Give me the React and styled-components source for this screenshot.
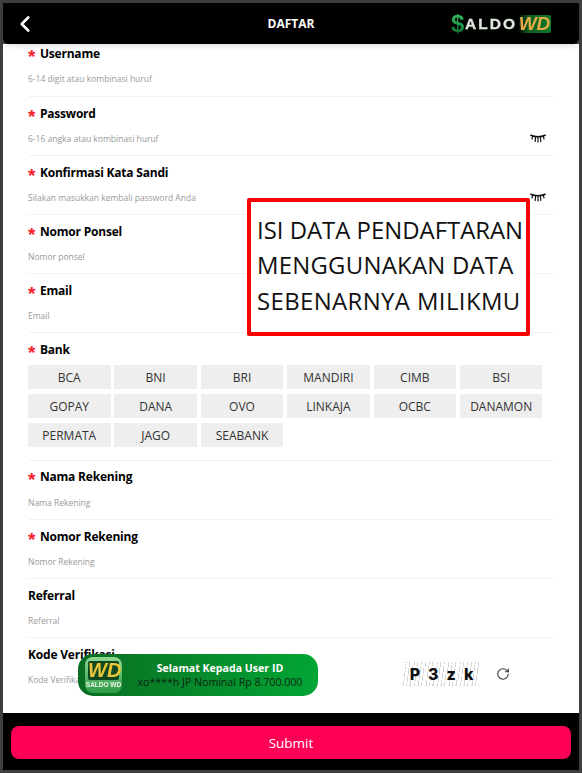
import React from 'react';
import styled, { createGlobalStyle } from 'styled-components';
import { ChevronLeft, RotateCw } from 'lucide-react';

const Global = createGlobalStyle`
  html, body { margin: 0; padding: 0; background: #3f3f3f; }
  * { box-sizing: border-box; }
`;

const Frame = styled.div`
  position: relative;
  width: 582px;
  height: 773px;
  padding: 3px;
  background: #3f3f3f;
  display: flex;
  flex-direction: column;
  overflow: hidden;
  font-family: "Open Sans", "Noto Sans", sans-serif;
`;

const Header = styled.header`
  position: relative;
  z-index: 2;
  flex: 0 0 41px;
  display: grid;
  grid-template-columns: 1fr auto 1fr;
  align-items: center;
  padding: 0 28px 0 9px;
  background: #000;
  color: #fff;
  border-radius: 0 0 6px 6px;
  box-shadow: 0 2px 6px rgba(0, 0, 0, 0.12);
`;

const BackButton = styled.span`
  display: flex;
  align-items: center;
  color: #fff;
`;

const Title = styled.h1`
  margin: 0 0 0 19px;
  font-size: 12px;
  font-weight: 700;
  letter-spacing: 0;
`;

const Logo = styled.div`
  justify-self: end;
  display: flex;
  align-items: center;
  font-family: "Liberation Sans", sans-serif;
  font-weight: 700;
  filter: blur(0.45px);
`;

const LogoDollar = styled.span`
  font-size: 24px;
  line-height: 24px;
  width: 14px;
  background: linear-gradient(180deg, #35c763, #0e6a30);
  -webkit-background-clip: text;
  background-clip: text;
  color: transparent;
`;

const LogoWord = styled.span`
  font-size: 15.5px;
  line-height: 1;
  letter-spacing: 2px;
  color: #dfe8dc;
  -webkit-text-stroke: 0.3px #dfe8dc;
`;

const LogoBadge = styled.span`
  margin-left: 1px;
  width: 33px;
  height: 18px;
  font-size: 19px;
  line-height: 18px;
  font-style: italic;
  font-weight: 700;
  text-align: center;
  color: #e5ac45;
  background: linear-gradient(90deg, #000 0, #0c5c1f 30%, #0d7a28 100%);
  border-radius: 2px;
`;

const Body = styled.main`
  flex: 1;
  min-height: 0;
  background: #fff;
  overflow: hidden;
  padding: 0 25px;
`;

const Form = styled.div`
  margin-top: -7px;
`;

const Row = styled.div`
  display: flex;
  flex-direction: column;
  height: ${(p) => p.$height || 59}px;
  padding-top: ${(p) => (p.$tight ? 6 : 7)}px;
  border-bottom: 1px solid #f3f3f3;
  &:first-child { height: 60px; }
  &:last-child { border-bottom: 0; }
`;

const Label = styled.div`
  display: flex;
  align-items: center;
  gap: 4.5px;
  height: 18px;
  font-size: 12px;
  letter-spacing: -0.2px;
  font-weight: 700;
  color: #000;
`;

const Star = styled.span`
  color: #f5222d;
  font-size: 19px;
  font-weight: 700;
  letter-spacing: 0;
  font-family: "Liberation Sans", sans-serif;
  line-height: 18px;
  padding-top: 7px;
`;

const InputLine = styled.div`
  display: flex;
  align-items: center;
  justify-content: space-between;
  height: 16px;
  margin-top: ${(p) => (p.$tight ? 9 : 8)}px;
`;

const Hint = styled.span`
  font-size: 8.5px;
  color: #9a9a9a;
`;

const EyeIcon = styled.svg`
  width: 16px;
  height: 9px;
  margin-right: 8px;
  flex: none;
`;

const BankGrid = styled.div`
  display: grid;
  grid-template-columns: repeat(6, 82.5px);
  grid-auto-rows: 24px;
  column-gap: 3.9px;
  row-gap: 5px;
  margin-top: 7px;
`;

const BankChip = styled.div`
  display: flex;
  align-items: center;
  justify-content: center;
  background: #eeeeee;
  color: #333;
  font-size: 12px;
`;

const CaptchaBox = styled.div`
  position: relative;
  width: 77px;
  height: 24px;
  display: flex;
  align-items: center;
  justify-content: center;
  gap: 8px;
  font-family: "Inter", sans-serif;
  font-weight: 800;
  font-size: 16px;
  color: #111;
`;

const CaptchaNoise = styled.svg`
  position: absolute;
  inset: 0;
  width: 100%;
  height: 100%;
`;

const CaptchaChar = styled.span`
  position: relative;
`;

const CaptchaGroup = styled.div`
  display: flex;
  align-items: center;
  gap: 16px;
  margin-top: -11px;
  margin-right: 44px;
  color: #333;
`;

const Footer = styled.footer`
  flex: 0 0 57px;
  background: #000;
  padding: 13px 8px 11px;
  display: flex;
`;

const Submit = styled.button`
  flex: 1;
  border: 0;
  border-radius: 8px;
  background: #ff0055;
  color: #fff;
  font-family: "Open Sans", sans-serif;
  font-size: 13.5px;
  font-weight: 400;
`;

const Notice = styled.div`
  position: absolute;
  left: 247px;
  top: 198px;
  width: 283px;
  height: 138px;
  z-index: 3;
  background: #fff;
  border: 4px solid #fa0000;
  border-radius: 2px;
  padding: 0 0 4px 6px;
  display: flex;
  flex-direction: column;
  justify-content: center;
  font-family: "Open Sans", sans-serif;
  font-size: 23.9px;
  line-height: 35.3px;
  color: #111;
  white-space: nowrap;
`;

const NoticeLine = styled.div`
  letter-spacing: ${(p) => p.$spacing || 0}px;
`;

const Toast = styled.div`
  position: absolute;
  left: 78px;
  top: 654px;
  width: 240px;
  height: 42px;
  z-index: 3;
  border-radius: 15px;
  background: linear-gradient(90deg, #0a6d22, #02a634);
  display: flex;
  align-items: center;
  padding-left: 7px;
`;

const ToastIcon = styled.div`
  flex: none;
  width: 37px;
  height: 36px;
  border-radius: 8px;
  background: linear-gradient(180deg, #8fd894, #2c9a46);
  display: flex;
  flex-direction: column;
  align-items: center;
  justify-content: center;
  font-family: "Liberation Sans", sans-serif;
  font-weight: 700;
  filter: blur(0.3px);
`;

const ToastIconMark = styled.span`
  width: 31px;
  font-size: 20px;
  line-height: 19px;
  font-style: italic;
  text-align: center;
  color: #e9c53a;
  background: #10481f;
  border-radius: 2px;
`;

const ToastIconWord = styled.span`
  font-size: 6.5px;
  line-height: 9px;
  color: #f2f6e8;
`;

const ToastText = styled.div`
  flex: 1;
  text-align: center;
  font-size: 10.6px;
  line-height: 14px;
  margin-top: -1px;
`;

const ToastTitle = styled.div`
  font-weight: 700;
  color: #fff;
`;

const ToastLine = styled.div`
  color: #0c2412;
`;

const Eye = () => (
  <EyeIcon viewBox="0 0 16 9" fill="none" stroke="#111" strokeWidth="1.2" strokeLinecap="round">
    <path d="M0.8 1.2 C5 3 11 3 15.2 1.2" strokeWidth="1.5" />
    <path d="M2.6 2.4 L2 5M5.6 3 L5.2 7.5M8 3.2 L8 8M10.4 3 L10.8 7.5M13.4 2.4 L14 5" />
  </EyeIcon>
);

const dots = Array.from({ length: 420 }, (_, i) => ({
  x: Math.floor((i * 47.3) % 77),
  y: Math.floor((i * 13.7 + (i % 7) * 3.1) % 24),
  o: 0.3 + ((i * 5) % 5) * 0.14,
}));

const fields = [
  { label: 'Username', hint: '6-14 digit atau kombinasi huruf', required: true },
  { label: 'Password', hint: '6-16 angka atau kombinasi huruf', required: true, eye: true },
  { label: 'Konfirmasi Kata Sandi', hint: 'Silakan masukkan kembali password Anda', required: true, eye: true },
  { label: 'Nomor Ponsel', hint: 'Nomor ponsel', required: true },
  { label: 'Email', hint: 'Email', required: true },
];

const banks = ['BCA', 'BNI', 'BRI', 'MANDIRI', 'CIMB', 'BSI', 'GOPAY', 'DANA', 'OVO', 'LINKAJA', 'OCBC', 'DANAMON', 'PERMATA', 'JAGO', 'SEABANK'];

const lower = [
  { label: 'Nama Rekening', hint: 'Nama Rekening', required: true, tight: true },
  { label: 'Nomor Rekening', hint: 'Nomor Rekening', required: true },
  { label: 'Referral', hint: 'Referral' },
];

const Field = ({ label, hint, required, eye, tight }) => (
  <Row $tight={tight}>
    <Label>
      {required && <Star>*</Star>}
      {label}
    </Label>
    <InputLine $tight={tight}>
      <Hint>{hint}</Hint>
      {eye && <Eye />}
    </InputLine>
  </Row>
);

export default function App() {
  return (
    <Frame>
      <Global />
      <Header>
        <BackButton><ChevronLeft size={26} strokeWidth={2.4} /></BackButton>
        <Title>DAFTAR</Title>
        <Logo>
          <LogoDollar>$</LogoDollar>
          <LogoWord>ALDO</LogoWord>
          <LogoBadge>WD</LogoBadge>
        </Logo>
      </Header>
      <Body>
        <Form>
          {fields.map((f) => <Field key={f.label} {...f} />)}
          <Row $height={128}>
            <Label><Star>*</Star>Bank</Label>
            <BankGrid>
              {banks.map((b) => <BankChip key={b}>{b}</BankChip>)}
            </BankGrid>
          </Row>
          {lower.map((f) => <Field key={f.label} {...f} />)}
          <Row>
            <Label>Kode Verifikasi</Label>
            <InputLine>
              <Hint>Kode Verifikasi</Hint>
              <CaptchaGroup>
                <CaptchaBox>
                  <CaptchaNoise viewBox="0 0 77 24">
                    {dots.map((d, i) => <rect key={i} x={d.x} y={d.y} width="1" height="1" fill="#777" opacity={d.o} />)}
                  </CaptchaNoise>
                  {['P', '3', 'z', 'k'].map((c) => <CaptchaChar key={c}>{c}</CaptchaChar>)}
                </CaptchaBox>
                <RotateCw size={14} strokeWidth={1.8} />
              </CaptchaGroup>
            </InputLine>
          </Row>
        </Form>
      </Body>
      <Footer>
        <Submit>Submit</Submit>
      </Footer>
      <Notice>
        <NoticeLine>ISI DATA PENDAFTARAN</NoticeLine>
        <NoticeLine $spacing={0.25}>MENGGUNAKAN DATA</NoticeLine>
        <NoticeLine $spacing={0.4}>SEBENARNYA MILIKMU</NoticeLine>
      </Notice>
      <Toast>
        <ToastIcon>
          <ToastIconMark>WD</ToastIconMark>
          <ToastIconWord>SALDO WD</ToastIconWord>
        </ToastIcon>
        <ToastText>
          <ToastTitle>Selamat Kepada User ID</ToastTitle>
          <ToastLine>xo****h JP Nominal Rp 8.700.000</ToastLine>
        </ToastText>
      </Toast>
    </Frame>
  );
}
